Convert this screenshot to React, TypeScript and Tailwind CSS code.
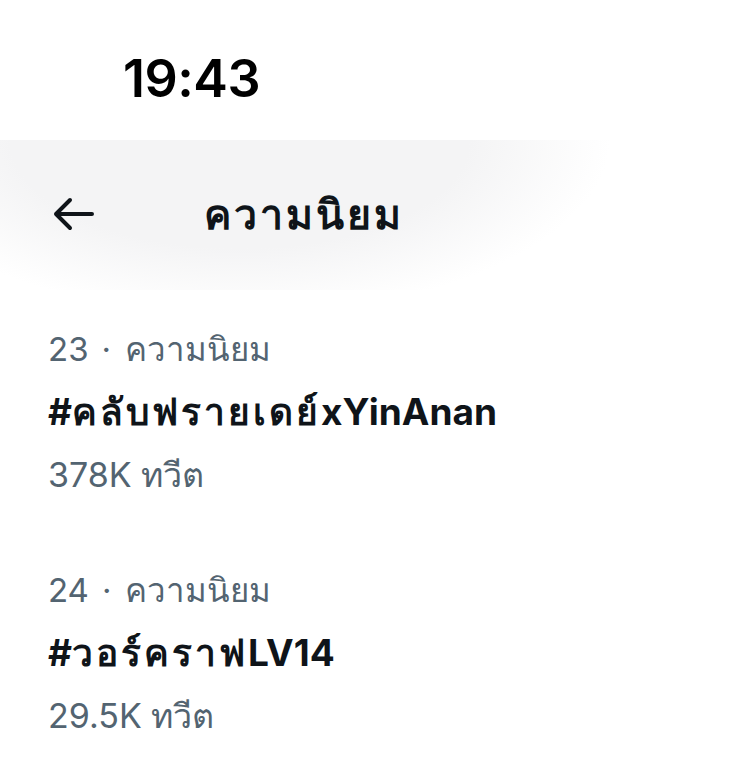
import React from "react";

interface TrendItem {
  rank: number;
  category: string;
  tag: string;
  count: string;
}

const TRENDS: TrendItem[] = [
  { rank: 23, category: "ความนิยม", tag: "#คลับฟรายเดย์xYinAnan", count: "378K ทวีต" },
  { rank: 24, category: "ความนิยม", tag: "#วอร์คราฟLV14", count: "29.5K ทวีต" },
];

// bold Thai in the fallback font runs narrower than the iOS one, so widen those runs a bit
function WideThai({ text }: { text: string }) {
  const parts = text.split(/([\u0E00-\u0E7F]+)/);
  return (
    <>
      {parts.map((p, i) =>
        /[\u0E00-\u0E7F]/.test(p) ? (
          <span key={i} className="tracking-[3px]">
            {p}
          </span>
        ) : (
          <span key={i}>{p}</span>
        )
      )}
    </>
  );
}

function BackArrow() {
  return (
    <svg width="44" height="36" viewBox="0 0 44 36" fill="none" aria-hidden>
      <path
        d="M41 17H5M19 3L5 17L19 31"
        stroke="#0f1419"
        strokeWidth="4"
        strokeLinecap="round"
        strokeLinejoin="round"
      />
    </svg>
  );
}

function Trend({ item }: { item: TrendItem }) {
  return (
    <div className="flex flex-col px-[48px]">
      <div className="h-[62px] flex items-center text-[33px] text-[#536471]">
        {item.rank}
        <span className="ml-[13px] mr-[14px]">·</span>
        {item.category}
      </div>
      <div className="h-[62px] flex items-center text-[37px] font-bold text-[#0f1419]">
        <WideThai text={item.tag} />
      </div>
      <div className="h-[62px] flex items-center text-[34px] text-[#536471]">{item.count}</div>
    </div>
  );
}

export default function App() {
  return (
    <div className="w-[740px] h-[779px] overflow-hidden bg-white font-['Inter','Noto_Sans',sans-serif]">
      {/* status bar */}
      <div className="h-[140px] pl-[123px] pt-[53px]">
        <span className="text-[52px] leading-none font-semibold tracking-[-0.5px] text-black">19:43</span>
      </div>

      {/* nav header with soft blurred backdrop */}
      <div className="h-[150px] flex items-center bg-[radial-gradient(ellipse_370px_175px_at_240px_0px,#f4f4f5_62%,rgba(255,255,255,0)_100%)]">
        <div className="ml-[51px]">
          <BackArrow />
        </div>
        <h1 className="ml-[109px] text-[41px] font-bold text-[#0f1419]">
          <WideThai text="ความนิยม" />
        </h1>
      </div>

      <div className="flex flex-col gap-[55px] pt-[29px]">
        {TRENDS.map((t) => (
          <Trend key={t.rank} item={t} />
        ))}
      </div>
    </div>
  );
}
